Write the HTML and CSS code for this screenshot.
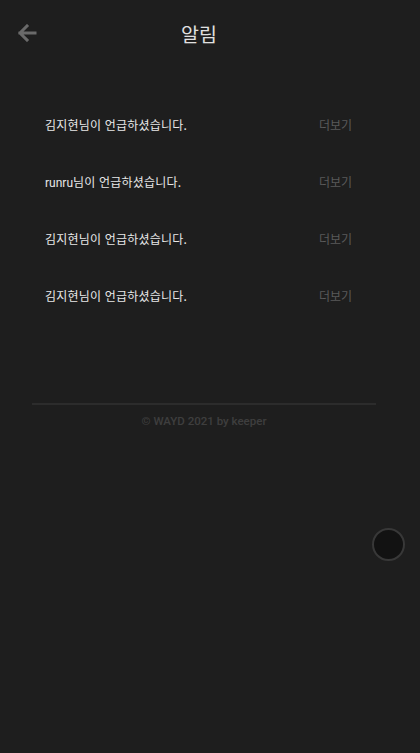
FILE: index.html
```html
<!DOCTYPE html>
<html lang="ko">
<head>
    <meta charset="UTF-8">
    <meta name="viewport" content="width=device-width, initial-scale=1.0">
    <title>알림</title>
    <link rel="stylesheet" href="styles.css">
</head>
<body>
    <header class="top-bar">
        <button class="back-btn" aria-label="뒤로">
            <svg width="20" height="18" viewBox="0 0 20 18">
                <path d="M18 9H3M10 2L3 9l7 7" fill="none" stroke="#6a6a6a" stroke-width="3" stroke-linecap="square"/>
            </svg>
        </button>
        <h1 class="title">알림</h1>
    </header>

    <ul class="alarm-list">
        <li class="alarm-item">
            <span class="alarm-text">김지현님이 언급하셨습니다.</span>
            <a class="more-link">더보기</a>
        </li>
        <li class="alarm-item">
            <span class="alarm-text"><span class="nick">runru</span>님이 언급하셨습니다.</span>
            <a class="more-link">더보기</a>
        </li>
        <li class="alarm-item">
            <span class="alarm-text">김지현님이 언급하셨습니다.</span>
            <a class="more-link">더보기</a>
        </li>
        <li class="alarm-item">
            <span class="alarm-text">김지현님이 언급하셨습니다.</span>
            <a class="more-link">더보기</a>
        </li>
    </ul>

    <footer class="footer">
        <p>© WAYD 2021 by keeper</p>
    </footer>

    <div class="float-btn"></div>
</body>
</html>
```

FILE: styles.css
```css
body {
    margin: 0;
    padding: 0;
    background-color: #1e1e1e;
    font-family: "Noto Sans CJK KR", "Noto Sans", sans-serif;
    color: #e6e6e6;
    min-height: 753px;
}
.top-bar {
    position: relative;
    height: 66px;
    padding-bottom: 4px;
    display: flex;
    align-items: center;
    justify-content: center;
}
.back-btn {
    position: absolute;
    left: 17px;
    top: 24px;
    padding: 0;
    border: none;
    background: none;
    cursor: pointer;
    line-height: 0;
}
.title {
    margin: 0;
    font-size: 19.5px;
    font-weight: 400;
    color: #e0e0e0;
    transform: translateX(-11px);
}
.alarm-list {
    list-style: none;
    margin: 0;
    padding: 26px 68px 0 45px;
}
.alarm-item {
    display: flex;
    justify-content: space-between;
    align-items: center;
    height: 57px;
    font-size: 12px;
}
.alarm-text {
    color: #e8e8e8;
    letter-spacing: 0.2px;
}
.nick {
    font-family: Roboto, sans-serif;
    letter-spacing: 0;
}
.more-link {
    color: #5a5a5a;
    cursor: pointer;
}
.footer {
    margin: 79px 44px 0 32px;
    border-top: 2px solid #2c2c2c;
    text-align: center;
}
.footer p {
    margin: 9px 0 0;
    font-family: Roboto, sans-serif;
    font-size: 11.5px;
    font-weight: 500;
    color: #3e3e3e;
}
.float-btn {
    position: fixed;
    left: 372px;
    top: 528px;
    width: 29px;
    height: 29px;
    border-radius: 50%;
    border: 2px solid #383838;
    background-color: #121212;
}
```
